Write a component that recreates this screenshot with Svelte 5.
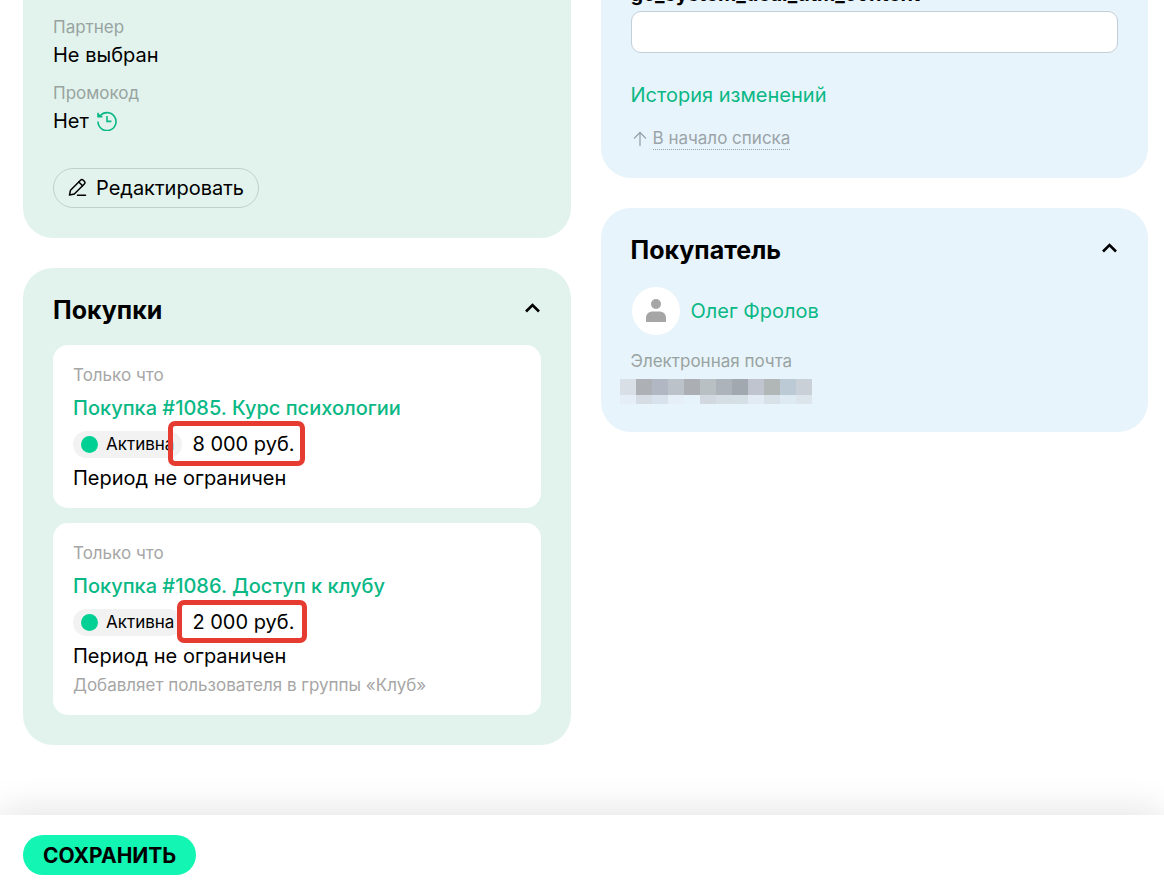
<script>
  let utmContent = '';
  let purchasesOpen = true;
  let buyerOpen = true;

  const fields = [
    { label: 'Менеджер', value: 'Не выбран' },
    { label: 'Партнер', value: 'Не выбран' },
    { label: 'Промокод', value: 'Нет', history: true },
  ];

  const purchases = [
    { id: 1085, name: 'Курс психологии', price: '8 000 руб.', mark: 'wide' },
    { id: 1086, name: 'Доступ к клубу', price: '2 000 руб.', mark: 'narrow', note: 'Добавляет пользователя в группы «Клуб»' },
  ];

  const mosaic = [
    ['#d8dfe6', '#adb1b5', '#b1b8c4', '#bbc2ca', '#abafb3', '#b9c0c3', '#adb3bb', '#a1a8b0', '#bfc4ce', '#b1b7b7', '#bccad5', '#c9d0d8'],
    ['#e5edf6', '#d5dce4', '#d8e2ec', '#e6eff8', '#e7f3fa', '#d1d8df', '#d5dde5', '#d5dfe6', '#e2eaf3', '#d8e0e8', '#deeaf1', '#dce4ec'],
  ];
</script>

<main>
  <div class="column left">
    <section class="panel green">
      {#each fields as field}
        <div class="field">
          <div class="label">{field.label}</div>
          <div class="value">
            {field.value}
            {#if field.history}
              <a href="#history" aria-label="История промокода">
                <svg width="20" height="20" viewBox="0 0 20 20" fill="none" stroke="#0ab885" stroke-width="1.6">
                  <path d="M3.2 4.7A9 9 0 1 1 1 10.6" />
                  <path d="M1 1.800v3.900h4.500M2.200 3.200v2" />
                  <path d="M10 5v5.4h4.4" />
                </svg>
              </a>
            {/if}
          </div>
        </div>
      {/each}
      <button class="edit">
        <svg width="20" height="20" viewBox="0 0 20 20" fill="none" stroke="#000" stroke-width="1.5" stroke-linejoin="round" stroke-linecap="round">
          <path d="M1.500 17l1-4.800L12.500 2.200a2 2 0 0 1 2.800 0l1 1a2 2 0 0 1 0 2.800L6.300 16z" />
          <path d="M10.800 4l3.800 3.800M9.500 17.200h8" />
        </svg>
        Редактировать
      </button>
    </section>

    <section class="panel green">
      <header>
        <h2>Покупки</h2>
        <button class="toggle" aria-label="Свернуть покупки" on:click={() => (purchasesOpen = !purchasesOpen)}>
          <svg width="16" height="14" viewBox="0 0 16 14" fill="none" stroke="#000" stroke-width="2.6"><path d="M1 8.500L7.500 2L14 8.500" /></svg>
        </button>
      </header>
      {#if purchasesOpen}
        <div class="cards">
          {#each purchases as p}
            <article>
              <div class="date">Только что</div>
              <a class="name" href="#purchase-{p.id}">Покупка #{p.id}. {p.name}</a>
              <div class="status">
                <span class="badge"><i></i>Активна</span>
                <span class="price">{p.price}</span>
                <span class="mark {p.mark}"></span>
              </div>
              <div class="period">Период не ограничен</div>
              {#if p.note}
                <div class="note">{p.note}</div>
              {/if}
            </article>
          {/each}
        </div>
      {/if}
    </section>
  </div>

  <div class="column right">
    <section class="panel blue">
      <label for="utm">gc_system_deal_utm_content</label>
      <input id="utm" type="text" bind:value={utmContent} />
      <a class="changes" href="#changes">История изменений</a>
      <div class="top">
        <svg width="14" height="16" viewBox="0 0 14 16" fill="none" stroke="#9aa3a8" stroke-width="1.3"><path d="M7 15V2M1 7.500L7 1.500l6 6" /></svg>
        <a href="#top">В начало списка</a>
      </div>
    </section>

    <section class="panel blue">
      <header>
        <h2>Покупатель</h2>
        <button class="toggle" aria-label="Свернуть покупателя" on:click={() => (buyerOpen = !buyerOpen)}>
          <svg width="16" height="14" viewBox="0 0 16 14" fill="none" stroke="#000" stroke-width="2.6"><path d="M1 8.500L7.500 2L14 8.500" /></svg>
        </button>
      </header>
      {#if buyerOpen}
        <div class="person">
          <span class="avatar">
            <svg width="20" height="24" viewBox="0 0 20 24" fill="#a6a6a6"><circle cx="10" cy="5" r="5" /><path d="M0 23v-4.500a6 6 0 0 1 6-6h8a6 6 0 0 1 6 6V23z" /></svg>
          </span>
          <a href="#user">Олег Фролов</a>
        </div>
        <div class="label">Электронная почта</div>
        <svg class="mosaic" width="192" height="25" shape-rendering="crispEdges">
          {#each mosaic as row, y}
            {#each row as color, x}
              <rect x={x * 16} y={y * 16} width="16" height="16" fill={color} />
            {/each}
          {/each}
        </svg>
      {/if}
    </section>
  </div>
</main>

<footer>
  <button class="save">СОХРАНИТЬ</button>
</footer>

<style>
  :global(body) {
    background: #fff;
    color: #000;
    font-family: Inter, "Open Sans", sans-serif;
    font-size: 20px;
    line-height: 30px;
    overflow: hidden;
  }
  main {
    display: grid;
    grid-template-columns: 1fr 1fr;
    align-items: start;
    gap: 30px;
    padding: 0 16px 145px 23px;
  }
  .column {
    display: flex;
    flex-direction: column;
    gap: 30px;
  }
  /* the page is scrolled down, upper fields are out of view */
  .left {
    margin-top: -82px;
  }
  .right {
    margin-top: -48px;
  }
  .panel {
    padding: 30px;
    border-radius: 30px;
  }
  .green {
    background: #e2f3ed;
  }
  .blue {
    padding-bottom: 28px;
    background: #e8f4fb;
  }
  a {
    color: #0ab885;
    text-decoration: none;
  }
  button {
    font-family: inherit;
    cursor: pointer;
  }
  .field {
    margin-bottom: 10px;
  }
  .label {
    font-size: 17px;
    line-height: 26px;
    color: #98a3a1;
  }
  .value,
  .value a {
    display: flex;
    align-items: center;
    gap: 8px;
  }
  .edit {
    display: flex;
    align-items: center;
    gap: 8px;
    height: 40px;
    margin-top: 32px;
    padding: 0 14px;
    border: 1px solid #c0cfca;
    border-radius: 20px;
    background: none;
    font-size: 20px;
    color: #000;
  }
  header {
    display: flex;
    align-items: center;
    justify-content: space-between;
    height: 24px;
    margin-bottom: 23px;
  }
  h2 {
    margin: 0;
    font-size: 25px;
    line-height: 24px;
    font-weight: 700;
  }
  .toggle {
    display: flex;
    padding: 0;
    border: none;
    background: none;
  }
  .cards {
    display: flex;
    flex-direction: column;
    gap: 15px;
  }
  article {
    padding: 15px 20px;
    border-radius: 15px;
    background: #fff;
  }
  .date,
  .note {
    font-size: 17px;
    color: #a6a6a6;
  }
  .note {
    line-height: 29px;
  }
  .name {
    display: block;
    margin-top: 3px;
    font-weight: 500;
  }
  .status {
    position: relative;
    display: flex;
    align-items: center;
    gap: 10px;
    margin: 6px 0 4px;
  }
  .badge {
    display: flex;
    align-items: center;
    gap: 8px;
    padding: 0 8px;
    border-radius: 14px;
    background: #f2f2f2;
    font-size: 17px;
    line-height: 27px;
  }
  .badge i {
    width: 17px;
    height: 17px;
    border-radius: 50%;
    background: #00d094;
  }
  .mark {
    position: absolute;
    box-sizing: border-box;
    border: 5px solid #e53b31;
    border-radius: 7px;
  }
  .wide {
    left: 95px;
    top: -8px;
    width: 137px;
    height: 45px;
  }
  .narrow {
    left: 104px;
    top: -7px;
    width: 130px;
    height: 43px;
  }
  label {
    display: block;
    line-height: 24px;
    font-weight: 700;
  }
  input {
    display: block;
    box-sizing: border-box;
    width: 100%;
    height: 42px;
    margin: 5px 0 27px;
    padding: 0 12px;
    border: 1px solid #c3ced9;
    border-radius: 10px;
    background: #fff;
    font: inherit;
  }
  .changes {
    display: block;
  }
  .top {
    display: flex;
    align-items: center;
    gap: 6px;
    margin-top: 18px;
    padding-left: 2px;
    font-size: 17px;
    line-height: 21px;
  }
  .top a {
    border-bottom: 1px dotted #9aa3a8;
    color: #9aa3a8;
  }
  .person {
    display: flex;
    align-items: center;
    gap: 11px;
    padding: 2px 0 13px 1px;
  }
  .avatar {
    display: flex;
    align-items: center;
    justify-content: center;
    width: 48px;
    height: 48px;
    border-radius: 50%;
    background: #fff;
  }
  .mosaic {
    display: block;
    margin: 5px 0 0 -11px;
  }
  footer {
    position: fixed;
    right: 0;
    bottom: 0;
    left: 0;
    padding: 20px 23px 15px;
    background: #fff;
    box-shadow: 0 0 40px rgba(0, 20, 10, 0.14);
  }
  .save {
    display: block;
    height: 40px;
    padding: 0 20px;
    border: none;
    border-radius: 20px;
    background: #12f5b3;
    font-size: 21px;
    font-weight: 700;
    color: #000;
  }
</style>
